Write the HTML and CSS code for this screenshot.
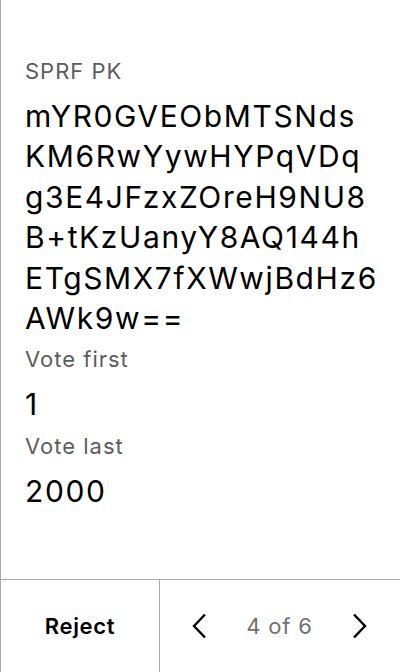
FILE: index.html
```html
<!DOCTYPE html>
<html>
<head>
<meta charset="utf-8">
<link rel="stylesheet" href="styles.css">
</head>
<body>
<div class="screen">
  <main class="content">
    <div class="label label-top">SPRF PK</div>
    <div class="value key">mYR0GVEObMTSNds<br>KM6RwYywHYPqVDq<br>g3E4JFzxZOreH9NU8<br>B+tKzUanyY8AQ144h<br>ETgSMX7fXWwjBdHz6<br>AWk9w==</div>
    <div class="label">Vote first</div>
    <div class="value">1</div>
    <div class="label">Vote last</div>
    <div class="value">2000</div>
  </main>
  <footer class="footer">
    <div class="reject">Reject</div>
    <div class="pager">
      <svg class="chev" width="16" height="26" viewBox="0 0 16 26"><polyline points="14,1.5 3,13 14,24.5" fill="none" stroke="#000" stroke-width="2.4"/></svg>
      <span class="count">4 of 6</span>
      <svg class="chev" width="16" height="26" viewBox="0 0 16 26"><polyline points="2,1.5 13,13 2,24.5" fill="none" stroke="#000" stroke-width="2.4"/></svg>
    </div>
  </footer>
</div>
</body>
</html>
```
FILE: styles.css
```css
html, body {
  margin: 0;
  padding: 0;
  background: #fff;
}
body {
  font-family: Inter, "Noto Sans", sans-serif;
  color: #000;
}
.screen {
  height: 672px;
  box-sizing: border-box;
  border-left: 1px solid #aaa;
  display: flex;
  flex-direction: column;
}
.content {
  flex: 1;
  padding: 57px 20px 0 24px;
}
.label {
  font-size: 22px;
  line-height: 28px;
  letter-spacing: 1px;
  color: #5c5c5c;
  margin-top: 7px;
}
.label-top {
  margin-top: 0;
}
.value {
  font-size: 30px;
  line-height: 40.4px;
  letter-spacing: 1.6px;
  margin-top: 11px;
  white-space: nowrap;
}
.footer {
  height: 92px;
  border-top: 1px solid #aaa;
  display: grid;
  grid-template-columns: 159px 1fr;
}
.reject {
  border-right: 1px solid #aaa;
  display: flex;
  align-items: center;
  justify-content: center;
  font-size: 22px;
  font-weight: 600;
  letter-spacing: 0.7px;
}
.pager {
  display: flex;
  align-items: center;
  justify-content: space-between;
  padding: 0 32px 0 31px;
}
.count {
  font-size: 22px;
  letter-spacing: 0.8px;
  color: #707070;
}
.chev {
  display: block;
}
```
